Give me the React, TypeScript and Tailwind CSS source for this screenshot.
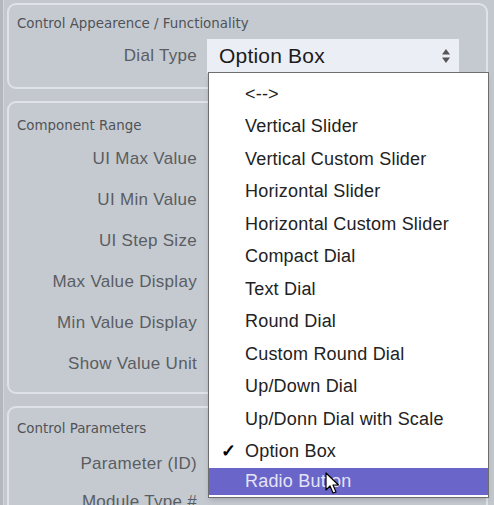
import React from 'react';

const dialTypes = [
  '<-->',
  'Vertical Slider',
  'Vertical Custom Slider',
  'Horizontal Slider',
  'Horizontal Custom Slider',
  'Compact Dial',
  'Text Dial',
  'Round Dial',
  'Custom Round Dial',
  'Up/Down Dial',
  'Up/Donn Dial with Scale',
  'Option Box',
];

const rangeLabels = [
  'UI Max Value',
  'UI Min Value',
  'UI Step Size',
  'Max Value Display',
  'Min Value Display',
  'Show Value Unit',
];

function Row({ label }: { label: string }) {
  return (
    <div className="flex h-[41px] items-center">
      <div className="w-[188px] text-right text-[17px] tracking-[0.3px] text-[#5a5d61]">{label}</div>
    </div>
  );
}

function Panel({ title, className, children }: { title: string; className?: string; children?: React.ReactNode }) {
  return (
    <div className={`shrink-0 rounded-[9px] border-2 border-[#dfe2e6] bg-[#c5cad1] ${className ?? ''}`}>
      <div
        className="pl-[8px] text-[13.4px] leading-[16px] text-[#505357]"
        style={{ fontFamily: '"DejaVu Sans", sans-serif' }}
      >
        {title}
      </div>
      {children}
    </div>
  );
}

export default function App() {
  return (
    <div
      className="relative flex h-[505px] w-[494px] overflow-hidden bg-[#c3c8ce]"
      style={{ fontFamily: '"Liberation Sans", Arial, sans-serif' }}
    >
      <div className="w-[4px] shrink-0 border-r border-[#d2d6da] bg-[#b4b8bd]" />
      <div className="flex w-[484px] shrink-0 flex-col gap-[12px] pl-[3px] pt-[3px]">
        <Panel title="Control Appearence / Functionality" className="h-[86px] pt-[11px]">
          <div className="mt-[7px] flex items-center gap-[10px]">
            <div className="w-[188px] text-right text-[17px] tracking-[0.3px] text-[#5a5d61]">Dial Type</div>
            <div className="flex h-[34px] w-[252px] items-center justify-between bg-[#eceef5] pl-[12px] pr-[8px]">
              <span className="text-[21px] tracking-[0.2px] text-[#1b1b1b]">Option Box</span>
              <svg width="10" height="16" viewBox="0 0 10 16">
                <path d="M5 1 L9 6.5 H1 Z" fill="#555" />
                <path d="M5 15 L9 9.5 H1 Z" fill="#555" />
              </svg>
            </div>
          </div>
        </Panel>

        <Panel title="Component Range" className="h-[293px] pt-[15px]">
          <div className="mt-[4px]">
            {rangeLabels.map(l => (
              <Row key={l} label={l} />
            ))}
          </div>
        </Panel>

        <Panel title="Control Parameters" className="h-[120px] pt-[13px]">
          <div className="mt-[6px]">
            <Row label="Parameter (ID)" />
            <div className="flex h-[36px] items-center">
              <div className="w-[188px] text-right text-[17px] tracking-[0.3px] text-[#5a5d61]">Module Type #</div>
            </div>
          </div>
        </Panel>
      </div>

      {/* open dropdown */}
      <div className="absolute left-[208px] top-[72px] w-[281px] border border-[#6e6e6e] bg-white pb-[2px] pt-[5px] shadow-md">
        {dialTypes.map(t => (
          <div key={t} className="relative flex h-[32.5px] items-center pl-[36px] text-[18px] tracking-[0.2px] text-[#222]">
            {t === 'Option Box' && <span className="absolute left-[12px] text-[18px] font-bold text-black">✓</span>}
            {t}
          </div>
        ))}
        <div className="flex h-[27px] items-center bg-[#6a65c9] pl-[36px] text-[18px] tracking-[0.2px] text-[#e4e4f6]">
          Radio Button
        </div>
      </div>

      {/* mouse pointer */}
      <svg className="absolute left-[325px] top-[472px]" width="16" height="24" viewBox="0 0 16 24">
        <path d="M1 1 L1 18 L5 14 L8 21 L11 20 L8 13 L13.5 13 Z" fill="white" stroke="black" strokeWidth="1.2" strokeLinejoin="round" />
      </svg>
    </div>
  );
}
